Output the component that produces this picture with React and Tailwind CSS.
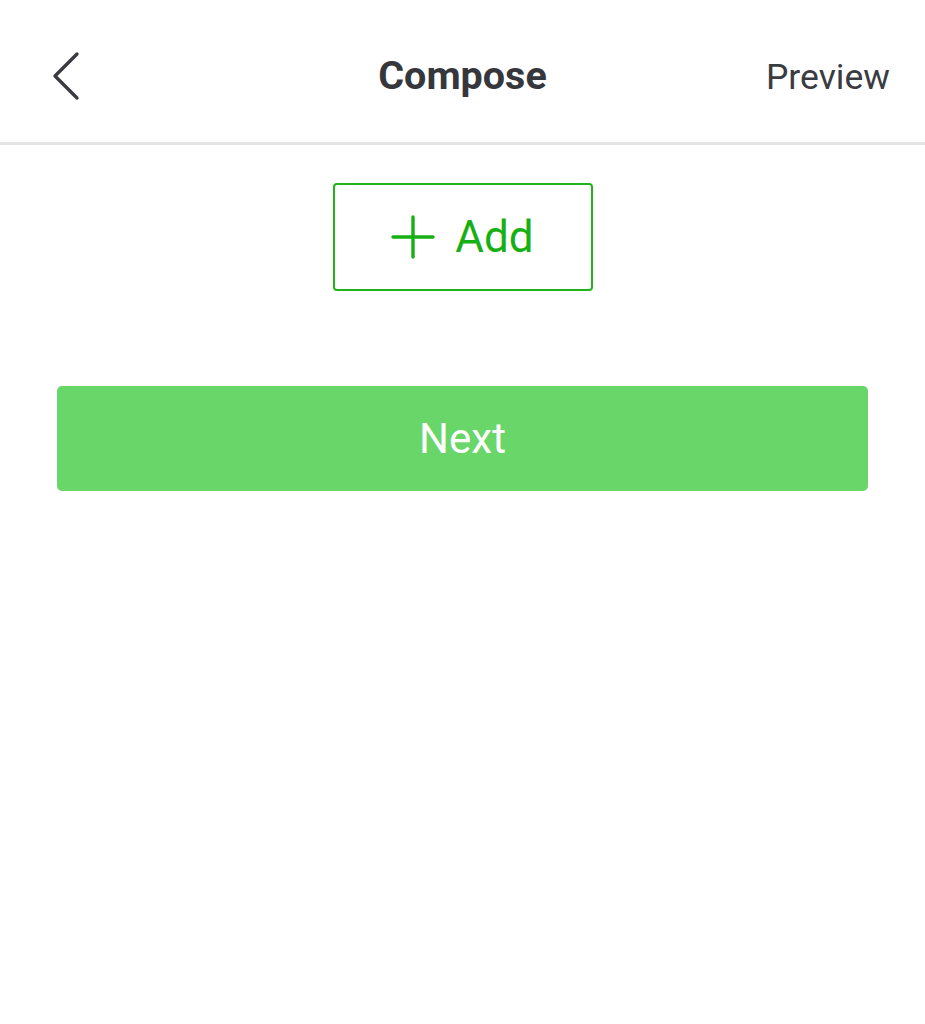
export default function App() {
  return (
    <div className="min-h-screen w-[925px] bg-white" style={{ fontFamily: 'Roboto, "Noto Sans", sans-serif' }}>
      {/* header */}
      <div className="grid h-[145px] grid-cols-3 items-center border-b-[3px] border-[#e4e4e4] px-[35px] pt-[10px]">
        <button className="ml-[15px] justify-self-start text-[#3a3c42]">
          <svg width="32" height="50" viewBox="0 0 32 50" fill="none" stroke="currentColor" strokeWidth="3.4" strokeLinecap="round" strokeLinejoin="round">
            <path d="M27 3 L5 25 L27 47" />
          </svg>
        </button>
        <h1 className="justify-self-center whitespace-nowrap text-[39.5px] font-bold text-[#35373d]">Compose</h1>
        <span className="mt-[3px] justify-self-end text-[35.5px] text-[#3a3c42]">Preview</span>
      </div>

      {/* add */}
      <div className="flex justify-center pt-[38px]">
        <button className="flex h-[108px] w-[260px] items-center justify-center gap-[20px] rounded-[4px] border-2 border-[#1fb41c] text-[#17b014]">
          <svg width="44" height="44" viewBox="0 0 44 44" stroke="currentColor" strokeWidth="3.4" strokeLinecap="round">
            <path d="M22 2 V42 M2 22 H42" />
          </svg>
          <span className="text-[44px] leading-none">Add</span>
        </button>
      </div>

      {/* next */}
      <div className="px-[57px] pt-[95px]">
        <button className="flex h-[105px] w-full items-center justify-center rounded-[5px] bg-[#68d668] text-[42px] text-white">
          Next
        </button>
      </div>
    </div>
  );
}
